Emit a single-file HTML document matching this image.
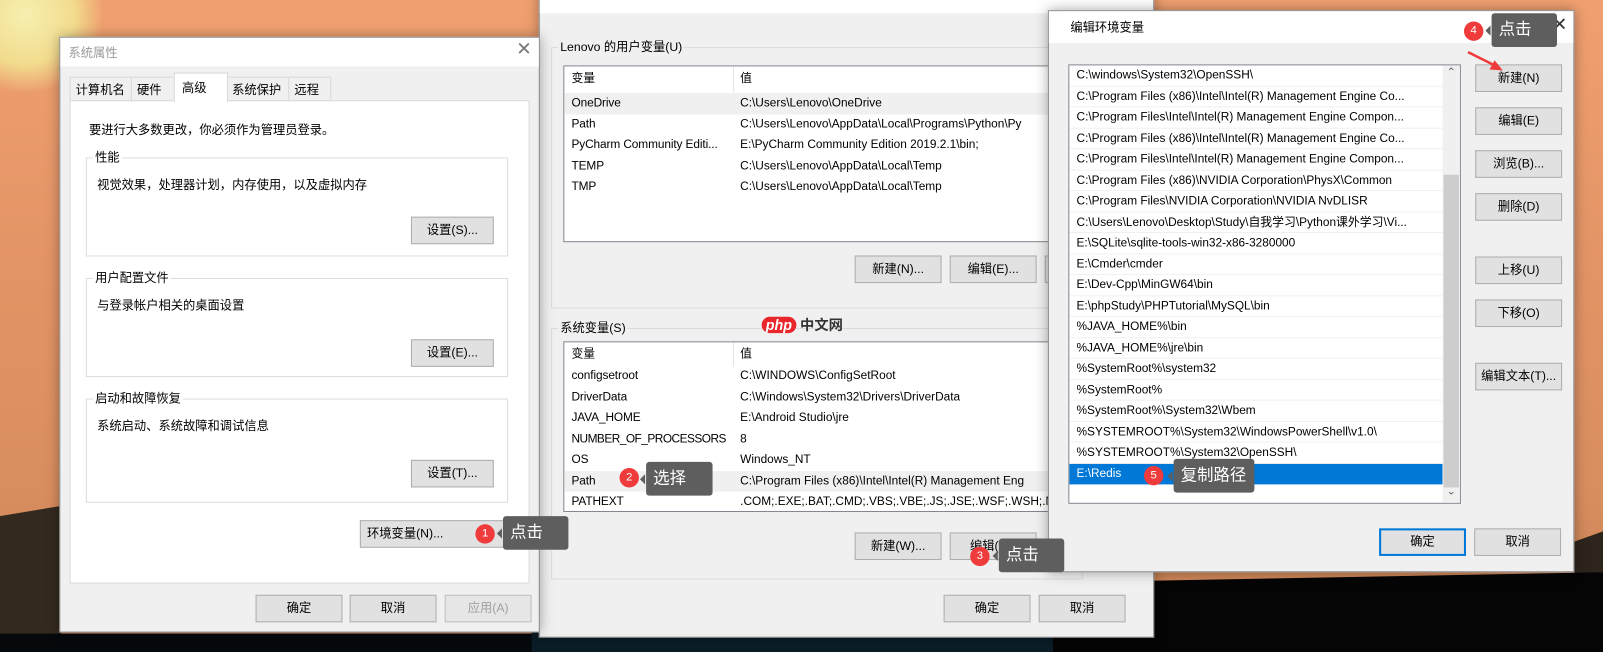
<!DOCTYPE html>
<html><head><meta charset="utf-8"><style>
*{margin:0;padding:0;box-sizing:border-box}
html,body{width:1603px;height:652px;overflow:hidden;background:#000}
#s{position:absolute;left:0;top:0;width:1568px;height:638px;transform:scale(1.02232,1.02194);transform-origin:0 0;font-family:"Liberation Sans","Noto Sans CJK SC",sans-serif;font-size:12px;color:#000;overflow:hidden}
.a{position:absolute}
.bg{left:0;top:0;width:1568px;height:638px;background:linear-gradient(180deg,#f0a070 0%,#e39466 40%,#d98e5f 75%,#c47e53 100%)}
.sun{left:-50px;top:-60px;width:150px;height:150px;border-radius:50%;background:radial-gradient(circle,#f6efb0 0%,#f2dc8e 45%,rgba(240,190,120,0) 72%)}
.dlg{position:absolute;background:#f0f0f0;border:1px solid #8a8a8a;box-shadow:0 0 12px rgba(0,0,0,.35)}
.tb{position:absolute;left:0;top:0;right:0;background:#fff}
.btn{position:absolute;height:27px;background:#e1e1e1;border:1px solid #adadad;text-align:center;line-height:25px;font-size:12px}
.grp{position:absolute;border:1px solid #dcdcdc}
.gl{position:absolute;top:-9px;left:6px;background:inherit;padding:0 2px;line-height:16px}
.list{position:absolute;background:#fff;border:1px solid #828790;overflow:hidden;font-size:11.6px}
.row{position:absolute;left:0;right:0;height:20.5px;line-height:20px;white-space:nowrap}
.c1{position:absolute;left:7px;letter-spacing:-0.1px}
.c2{position:absolute;left:172px}
.tip{position:absolute;background:#5e5e5e;color:#fff;font-size:16px;border-radius:3px;line-height:33px;padding-left:7px}
.tip:before{content:"";position:absolute;left:-6px;top:12px;border:5px solid transparent;border-right-color:#5e5e5e;border-left:0;width:0;height:0}
.dot{position:absolute;width:19px;height:19px;border-radius:50%;background:#ef3b3b;color:#fff;font-size:11px;text-align:center;line-height:19px}
.pr{position:absolute;left:0;right:0;height:20.5px;line-height:20px;padding-left:7px;border-bottom:1px solid #f0f0f0;white-space:nowrap}
</style></head><body><div id="s">
<div class="a bg"></div>
<div class="a sun"></div>
<svg class="a" style="left:0;top:0" width="1568" height="638">
<polygon points="0,505 60,495 60,638 0,638" fill="#33291f"/>
<polygon points="1540,530 1568,520 1568,638 1540,638" fill="#2d241c"/>
<rect x="0" y="620" width="1568" height="18" fill="#05090c"/>
<polygon points="520,560 1030,560 1030,638 520,638" fill="#0b1d27"/>
<polygon points="1030,570 1568,560 1568,638 1030,638" fill="#050505"/>
</svg>

<div class="dlg" style="left:527px;top:-10px;width:602px;height:634px">
 <div class="tb" style="height:22px"></div>
 <div class="grp" style="left:11px;top:55px;width:520px;height:256px;background:#f0f0f0"><span class="gl">Lenovo 的用户变量(U)</span></div>
 <div class="list" style="left:23px;top:73px;width:500px;height:173px">
  <div class="row" style="top:0;height:25px;line-height:24px"><span class="c1">变量</span><span class="c2">值</span><div class="a" style="left:165px;top:0;width:1px;height:25px;background:#e5e5e5"></div></div>
  <div class="row" style="top:26px;background:#f0f0f0"><span class="c1">OneDrive</span><span class="c2">C:\Users\Lenovo\OneDrive</span></div>
  <div class="row" style="top:46.5px"><span class="c1">Path</span><span class="c2">C:\Users\Lenovo\AppData\Local\Programs\Python\Py</span></div>
  <div class="row" style="top:67px"><span class="c1">PyCharm Community Editi...</span><span class="c2">E:\PyCharm Community Edition 2019.2.1\bin;</span></div>
  <div class="row" style="top:87.5px"><span class="c1">TEMP</span><span class="c2">C:\Users\Lenovo\AppData\Local\Temp</span></div>
  <div class="row" style="top:108px"><span class="c1">TMP</span><span class="c2">C:\Users\Lenovo\AppData\Local\Temp</span></div>
 </div>
 <div class="btn" style="left:308px;top:259px;width:85px">新建(N)...</div>
 <div class="btn" style="left:401px;top:259px;width:85px">编辑(E)...</div>
 <div class="btn" style="left:494px;top:259px;width:40px"></div>
 <div class="grp" style="left:11px;top:330px;width:520px;height:246px;background:#f0f0f0"><span class="gl">系统变量(S)</span></div>
 <div class="list" style="left:23px;top:343px;width:500px;height:167px">
  <div class="row" style="top:0;height:24px;line-height:24px"><span class="c1">变量</span><span class="c2">值</span><div class="a" style="left:165px;top:0;width:1px;height:24px;background:#e5e5e5"></div></div>
  <div class="row" style="top:23px"><span class="c1">configsetroot</span><span class="c2">C:\WINDOWS\ConfigSetRoot</span></div>
  <div class="row" style="top:43.5px"><span class="c1">DriverData</span><span class="c2">C:\Windows\System32\Drivers\DriverData</span></div>
  <div class="row" style="top:64px"><span class="c1">JAVA_HOME</span><span class="c2">E:\Android Studio\jre</span></div>
  <div class="row" style="top:84.5px"><span class="c1" style="letter-spacing:-0.5px">NUMBER_OF_PROCESSORS</span><span class="c2">8</span></div>
  <div class="row" style="top:105px"><span class="c1">OS</span><span class="c2">Windows_NT</span></div>
  <div class="row" style="top:125.5px;background:#f0f0f0"><span class="c1">Path</span><span class="c2">C:\Program Files (x86)\Intel\Intel(R) Management Eng</span></div>
  <div class="row" style="top:146px"><span class="c1">PATHEXT</span><span class="c2">.COM;.EXE;.BAT;.CMD;.VBS;.VBE;.JS;.JSE;.WSF;.WSH;.M</span></div>
 </div>
 <div class="btn" style="left:308px;top:530px;width:85px">新建(W)...</div>
 <div class="btn" style="left:401px;top:530px;width:85px">编辑(I)...</div>
 <div class="btn" style="left:395px;top:591px;width:85px">确定</div>
 <div class="btn" style="left:488px;top:591px;width:85px">取消</div>
</div>
<div class="a" style="left:745px;top:308px;font-size:14px;font-weight:bold;white-space:nowrap"><span style="background:#e8262b;color:#fff;border-radius:9px;padding:0 4px;font-style:italic">php</span><span style="color:#333"> 中文网</span></div>

<div class="dlg" style="left:58px;top:36px;width:470px;height:583px">
 <div class="tb" style="height:28px"><span class="a" style="left:8px;top:6px;color:#999">系统属性</span><span class="a" style="left:446px;top:1px;font-size:18px;color:#777">✕</span></div>
 <div class="a" style="left:9px;top:61px;width:450px;height:473px;background:#fff;border:1px solid #d9d9d9"></div>
 <div class="a" style="left:9px;top:38px;width:61px;height:24px;border:1px solid #d9d9d9;background:#f0f0f0;padding:3px 5px">计算机名</div>
 <div class="a" style="left:69px;top:38px;width:43px;height:24px;border:1px solid #d9d9d9;background:#f0f0f0;padding:3px 5px">硬件</div>
 <div class="a" style="left:111px;top:34px;width:53px;height:29px;border:1px solid #d9d9d9;border-bottom:0;background:#fff;padding:5px 7px">高级</div>
 <div class="a" style="left:163px;top:38px;width:61px;height:24px;border:1px solid #d9d9d9;background:#f0f0f0;padding:3px 4px">系统保护</div>
 <div class="a" style="left:223px;top:38px;width:42px;height:24px;border:1px solid #d9d9d9;background:#f0f0f0;padding:3px 5px">远程</div>
 <div class="a" style="left:28px;top:81px">要进行大多数更改，你必须作为管理员登录。</div>
 <div class="grp" style="left:25px;top:117px;width:413px;height:97px;background:#fff"><span class="gl" style="background:#fff">性能</span><span class="a" style="left:10px;top:17px">视觉效果，处理器计划，内存使用，以及虚拟内存</span></div>
 <div class="btn" style="left:343px;top:175px;width:81px">设置(S)...</div>
 <div class="grp" style="left:25px;top:235px;width:413px;height:97px;background:#fff"><span class="gl" style="background:#fff">用户配置文件</span><span class="a" style="left:10px;top:17px">与登录帐户相关的桌面设置</span></div>
 <div class="btn" style="left:343px;top:295px;width:81px">设置(E)...</div>
 <div class="grp" style="left:25px;top:353px;width:413px;height:102px;background:#fff"><span class="gl" style="background:#fff">启动和故障恢复</span><span class="a" style="left:10px;top:17px">系统启动、系统故障和调试信息</span></div>
 <div class="btn" style="left:343px;top:413px;width:81px">设置(T)...</div>
 <div class="btn" style="left:293px;top:472px;width:148px;text-align:left;padding-left:6px">环境变量(N)...</div>
 <div class="btn" style="left:191px;top:545px;width:85px">确定</div>
 <div class="btn" style="left:283px;top:545px;width:85px">取消</div>
 <div class="btn" style="left:376px;top:545px;width:85px;color:#a0a0a0;border-color:#bfbfbf;background:#e6e6e6">应用(A)</div>
</div>

<div class="dlg" style="left:1025px;top:10px;width:515px;height:550px">
 <div class="tb" style="height:31px"><span class="a" style="left:21px;top:7px">编辑环境变量</span><span class="a" style="left:492px;top:3px;font-size:18px;color:#333">✕</span></div>
 <div class="list" style="left:19px;top:52px;width:384px;height:430px">
  <div class="a" style="left:0;top:0;width:365px;height:430px">
   <div class="pr" style="top:0">C:\windows\System32\OpenSSH\</div>
   <div class="pr" style="top:20.5px">C:\Program Files (x86)\Intel\Intel(R) Management Engine Co...</div>
   <div class="pr" style="top:41px">C:\Program Files\Intel\Intel(R) Management Engine Compon...</div>
   <div class="pr" style="top:61.5px">C:\Program Files (x86)\Intel\Intel(R) Management Engine Co...</div>
   <div class="pr" style="top:82px">C:\Program Files\Intel\Intel(R) Management Engine Compon...</div>
   <div class="pr" style="top:102.5px">C:\Program Files (x86)\NVIDIA Corporation\PhysX\Common</div>
   <div class="pr" style="top:123px">C:\Program Files\NVIDIA Corporation\NVIDIA NvDLISR</div>
   <div class="pr" style="top:143.5px">C:\Users\Lenovo\Desktop\Study\自我学习\Python课外学习\Vi...</div>
   <div class="pr" style="top:164px">E:\SQLite\sqlite-tools-win32-x86-3280000</div>
   <div class="pr" style="top:184.5px">E:\Cmder\cmder</div>
   <div class="pr" style="top:205px">E:\Dev-Cpp\MinGW64\bin</div>
   <div class="pr" style="top:225.5px">E:\phpStudy\PHPTutorial\MySQL\bin</div>
   <div class="pr" style="top:246px">%JAVA_HOME%\bin</div>
   <div class="pr" style="top:266.5px">%JAVA_HOME%\jre\bin</div>
   <div class="pr" style="top:287px">%SystemRoot%\system32</div>
   <div class="pr" style="top:307.5px">%SystemRoot%</div>
   <div class="pr" style="top:328px">%SystemRoot%\System32\Wbem</div>
   <div class="pr" style="top:348.5px">%SYSTEMROOT%\System32\WindowsPowerShell\v1.0\</div>
   <div class="pr" style="top:369px">%SYSTEMROOT%\System32\OpenSSH\</div>
   <div class="pr" style="top:389.5px;background:#0078d7;color:#fff;border-bottom:0">E:\Redis</div>
  </div>
  <div class="a" style="left:365px;top:0;width:17px;height:428px;background:#f0f0f0"><span class="a" style="left:4px;top:0;color:#606060;font-size:11px">⌃</span><div class="a" style="left:1px;top:107px;width:15px;height:306px;background:#cdcdcd"></div><span class="a" style="left:4px;top:410px;color:#606060;font-size:11px">⌄</span></div>
 </div>
 <div class="btn" style="left:417px;top:52px;width:85px">新建(N)</div>
 <div class="btn" style="left:417px;top:94px;width:85px">编辑(E)</div>
 <div class="btn" style="left:417px;top:136px;width:85px">浏览(B)...</div>
 <div class="btn" style="left:417px;top:178px;width:85px">删除(D)</div>
 <div class="btn" style="left:417px;top:240px;width:85px">上移(U)</div>
 <div class="btn" style="left:417px;top:282px;width:85px">下移(O)</div>
 <div class="btn" style="left:417px;top:344px;width:85px">编辑文本(T)...</div>
 <div class="btn" style="left:323px;top:506px;width:85px;border:2px solid #0078d7;line-height:23px">确定</div>
 <div class="btn" style="left:416px;top:506px;width:85px">取消</div>
</div>

<div class="dot" style="left:465px;top:513px">1</div><div class="tip" style="left:492px;top:505px;width:64px">点击</div>
<div class="dot" style="left:606px;top:458px">2</div><div class="tip" style="left:632px;top:452px;width:65px">选择</div>
<div class="dot" style="left:949px;top:535px">3</div><div class="tip" style="left:977px;top:527px;width:64px">点击</div>
<div class="dot" style="left:1432px;top:21px">4</div><div class="tip" style="left:1459px;top:13px;width:64px">点击</div>
<div class="dot" style="left:1119px;top:456px">5</div><div class="tip" style="left:1148px;top:449px;width:79px">复制路径</div>
<svg class="a" style="left:1430px;top:45px" width="50" height="35"><line x1="6" y1="6" x2="32" y2="19" stroke="#ef3b3b" stroke-width="2.5"/><polygon points="40,24 27,23 32,14" fill="#ef3b3b"/></svg>
</div></body></html>
